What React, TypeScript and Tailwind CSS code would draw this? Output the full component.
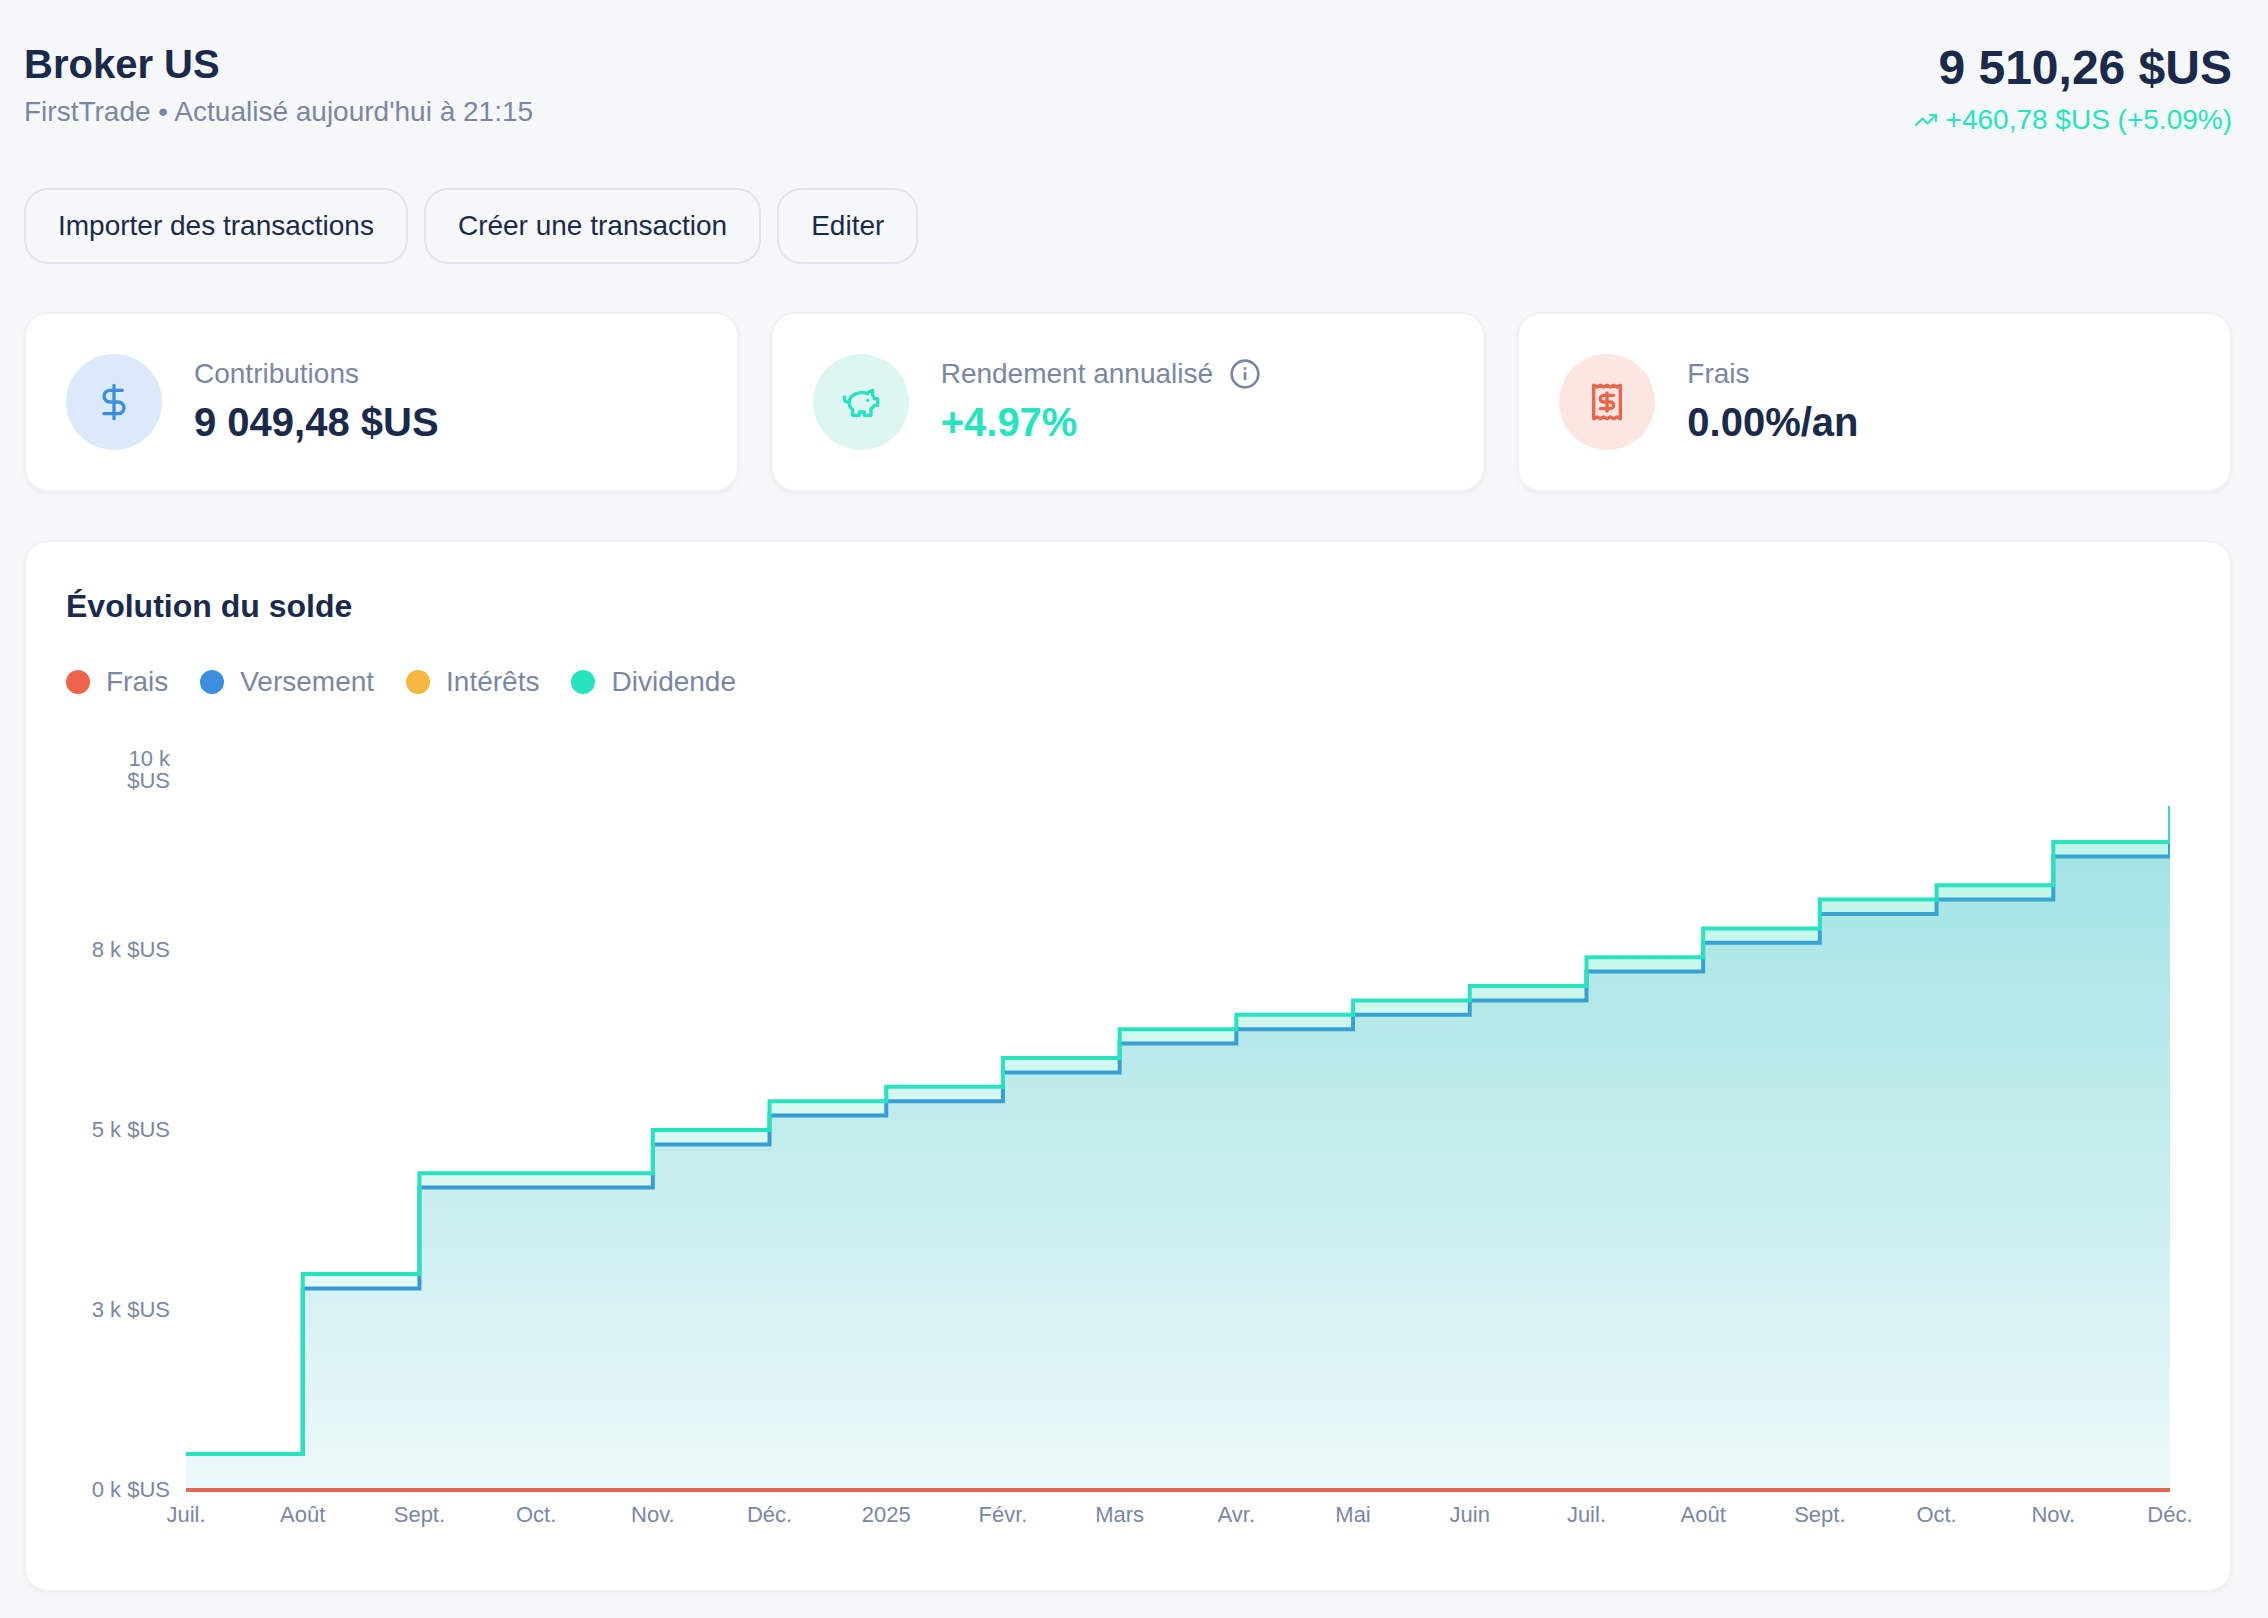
import React from 'react';
import { DollarSign, Receipt, TrendingUp } from 'lucide-react';

interface Step {
  month: string;
  deposit: number;
  dividend: number;
}

interface StatCardProps {
  label: string;
  value: string;
  icon: React.ReactNode;
  iconClass: string;
  valueClass?: string;
  info?: boolean;
}

const MAX = 10000;

const steps: Step[] = [
  { month: 'Juil.', deposit: 500, dividend: 500 },
  { month: 'Août', deposit: 2800, dividend: 3000 },
  { month: 'Sept.', deposit: 4200, dividend: 4400 },
  { month: 'Oct.', deposit: 4200, dividend: 4400 },
  { month: 'Nov.', deposit: 4800, dividend: 5000 },
  { month: 'Déc.', deposit: 5200, dividend: 5400 },
  { month: '2025', deposit: 5400, dividend: 5600 },
  { month: 'Févr.', deposit: 5800, dividend: 6000 },
  { month: 'Mars', deposit: 6200, dividend: 6400 },
  { month: 'Avr.', deposit: 6400, dividend: 6600 },
  { month: 'Mai', deposit: 6600, dividend: 6800 },
  { month: 'Juin', deposit: 6800, dividend: 7000 },
  { month: 'Juil.', deposit: 7200, dividend: 7400 },
  { month: 'Août', deposit: 7600, dividend: 7800 },
  { month: 'Sept.', deposit: 8000, dividend: 8200 },
  { month: 'Oct.', deposit: 8200, dividend: 8400 },
  { month: 'Nov.', deposit: 8800, dividend: 9000 },
  { month: 'Déc.', deposit: 9050, dividend: 9500 },
];

const yTicks = ['10 k $US', '8 k $US', '5 k $US', '3 k $US', '0 k $US'];

const legend = [
  { label: 'Frais', dot: 'bg-[#ec644b]' },
  { label: 'Versement', dot: 'bg-[#3b8ede]' },
  { label: 'Intérêts', dot: 'bg-[#f6b740]' },
  { label: 'Dividende', dot: 'bg-[#27e4bf]' },
];

const actions = ['Importer des transactions', 'Créer une transaction', 'Editer'];

// The value holds until the next month, then jumps
const stepPath = (values: number[]) =>
  values
    .map((v, i) => (i === 0 ? `M0 ${MAX - v}` : `H${i * 100}V${MAX - v}`))
    .join('');

const PiggyIcon = () => (
  <svg viewBox="0 0 24 24" className="size-10" fill="none" stroke="currentColor" strokeWidth={2} strokeLinecap="round" strokeLinejoin="round">
    <path d="M19 5c-1.5 0-2.8 1.4-3 2-3.5-1.5-11-.3-11 5 0 1.8 0 3 2 4.5V20h4v-2h3v2h4v-4c1-.5 1.7-1 2-2h2v-4h-2c0-1-.5-1.5-1-2V5z" />
    <path d="M2 9v1c0 1.1.9 2 2 2h1" />
    <path d="M16 11h.01" />
  </svg>
);

const InfoIcon = () => (
  <svg viewBox="0 0 24 24" className="size-8" fill="currentColor">
    <circle cx={12} cy={12} r={10} fill="none" stroke="currentColor" strokeWidth={2} />
    <circle cx={12} cy={7.9} r={1.1} />
    <rect x={11} y={10.5} width={2} height={6} rx={0.6} />
  </svg>
);

const StatCard: React.FC<StatCardProps> = ({ label, value, icon, iconClass, valueClass = '', info }) => (
  <div className="flex items-center gap-8 rounded-3xl border-2 border-[#f1f2f4] bg-white p-10 shadow-[0_2px_4px_rgba(0,0,0,0.04)]">
    <div className={`flex size-24 shrink-0 items-center justify-center rounded-full ${iconClass}`}>{icon}</div>
    <div>
      <div className="flex items-center gap-4 text-[28px] leading-10 text-[#7b87a2]">
        {label}
        {info && (
          <button type="button" aria-label={label}>
            <InfoIcon />
          </button>
        )}
      </div>
      <p className={`text-[40px] leading-14 font-bold ${valueClass}`}>{value}</p>
    </div>
  </div>
);

const BalanceChart = () => {
  const deposit = stepPath(steps.map((s) => s.deposit));
  const dividend = stepPath(steps.map((s) => s.dividend));
  const width = (steps.length - 1) * 100;

  return (
    <div className="flex pt-17 pr-5 pb-6 text-[22px] leading-[22px] text-[#7b87a2]">
      <div className="flex h-180 w-30 flex-col justify-between pr-4">
        {yTicks.map((tick, i) => (
          <div key={tick} className="flex h-0 items-center justify-end text-right">
            <span className={i === 0 ? 'w-14' : 'whitespace-nowrap'}>{tick}</span>
          </div>
        ))}
      </div>

      <div className="flex-1">
        <svg viewBox={`0 0 ${width} ${MAX}`} preserveAspectRatio="none" className="block h-180 w-full overflow-visible">
          <defs>
            <linearGradient id="depositFill" x1="0" y1="0" x2="0" y2="1">
              <stop offset="5%" stopColor="#3b8ede" stopOpacity={0.2} />
              <stop offset="95%" stopColor="#3b8ede" stopOpacity={0.05} />
            </linearGradient>
            <linearGradient id="dividendFill" x1="0" y1="0" x2="0" y2="1">
              <stop offset="5%" stopColor="#2cdcb2" stopOpacity={0.3} />
              <stop offset="95%" stopColor="#2cdcb2" stopOpacity={0.06} />
            </linearGradient>
            {/* Leaves room under the scale so the base line is not cut */}
            <clipPath id="plotArea">
              <rect x={0} y={0} width={width} height={MAX + 100} />
            </clipPath>
          </defs>
          <g clipPath="url(#plotArea)" fill="none" strokeWidth={4}>
            <path d={`M0 ${MAX}H${width}`} stroke="#ec644b" vectorEffect="non-scaling-stroke" />
            <path d={`${deposit}V${MAX}H0Z`} fill="url(#depositFill)" />
            <path d={deposit} stroke="#3b8ede" vectorEffect="non-scaling-stroke" />
            <path d={`${dividend}V${MAX}H0Z`} fill="url(#dividendFill)" />
            <path d={dividend} stroke="#27e4bf" vectorEffect="non-scaling-stroke" />
          </g>
        </svg>
        <div className="flex justify-between pt-3.5">
          {steps.map((s, i) => (
            <div key={i} className="flex w-0 justify-center whitespace-nowrap">
              {s.month}
            </div>
          ))}
        </div>
      </div>
    </div>
  );
};

const App = () => (
  <div className="flex min-h-screen flex-col gap-12 bg-[#f6f7f9] pt-9 pr-9 pb-6 pl-6 font-['Liberation_Sans',Arial,sans-serif] text-[#1b2a4a]">
    <header className="flex justify-between">
      <div>
        <h1 className="text-[40px] leading-14 font-bold">Broker US</h1>
        <p className="text-[28px] leading-10 text-[#7b87a2]">FirstTrade • Actualisé aujourd'hui à 21:15</p>
      </div>
      <div className="flex flex-col items-end">
        <p className="text-5xl leading-16 font-bold">9 510,26 $US</p>
        <p className="flex items-center gap-2 text-[28px] leading-10 text-[#27e4bf]">
          <TrendingUp className="size-6" />
          +460,78 $US (+5.09%)
        </p>
      </div>
    </header>

    <div className="flex gap-4">
      {actions.map((action) => (
        <button key={action} type="button" className="rounded-3xl border-2 border-[#e2e4eb] px-8 py-4 text-[28px] leading-10">
          {action}
        </button>
      ))}
    </div>

    <section className="grid grid-cols-3 gap-8">
      <StatCard
        label="Contributions"
        value="9 049,48 $US"
        icon={<DollarSign className="size-10" />}
        iconClass="bg-[#dce9f9] text-[#3b8ede]"
      />
      <StatCard
        label="Rendement annualisé"
        value="+4.97%"
        icon={<PiggyIcon />}
        iconClass="bg-[#ddf6f1] text-[#27e4bf]"
        valueClass="text-[#27e4bf]"
        info
      />
      <StatCard
        label="Frais"
        value="0.00%/an"
        icon={<Receipt className="size-10" />}
        iconClass="bg-[#fce6e1] text-[#ec644b]"
      />
    </section>

    <section className="rounded-3xl border-2 border-[#f1f2f4] bg-white p-10 shadow-[0_2px_4px_rgba(0,0,0,0.04)]">
      <h2 className="text-[32px] leading-12 font-bold">Évolution du solde</h2>
      <ul className="flex gap-8 pt-8 text-[28px] leading-10 text-[#7b87a2]">
        {legend.map(({ label, dot }) => (
          <li key={label} className="flex items-center gap-4">
            <span className={`size-6 rounded-full ${dot}`} />
            {label}
          </li>
        ))}
      </ul>
      <BalanceChart />
    </section>
  </div>
);

export default App;
